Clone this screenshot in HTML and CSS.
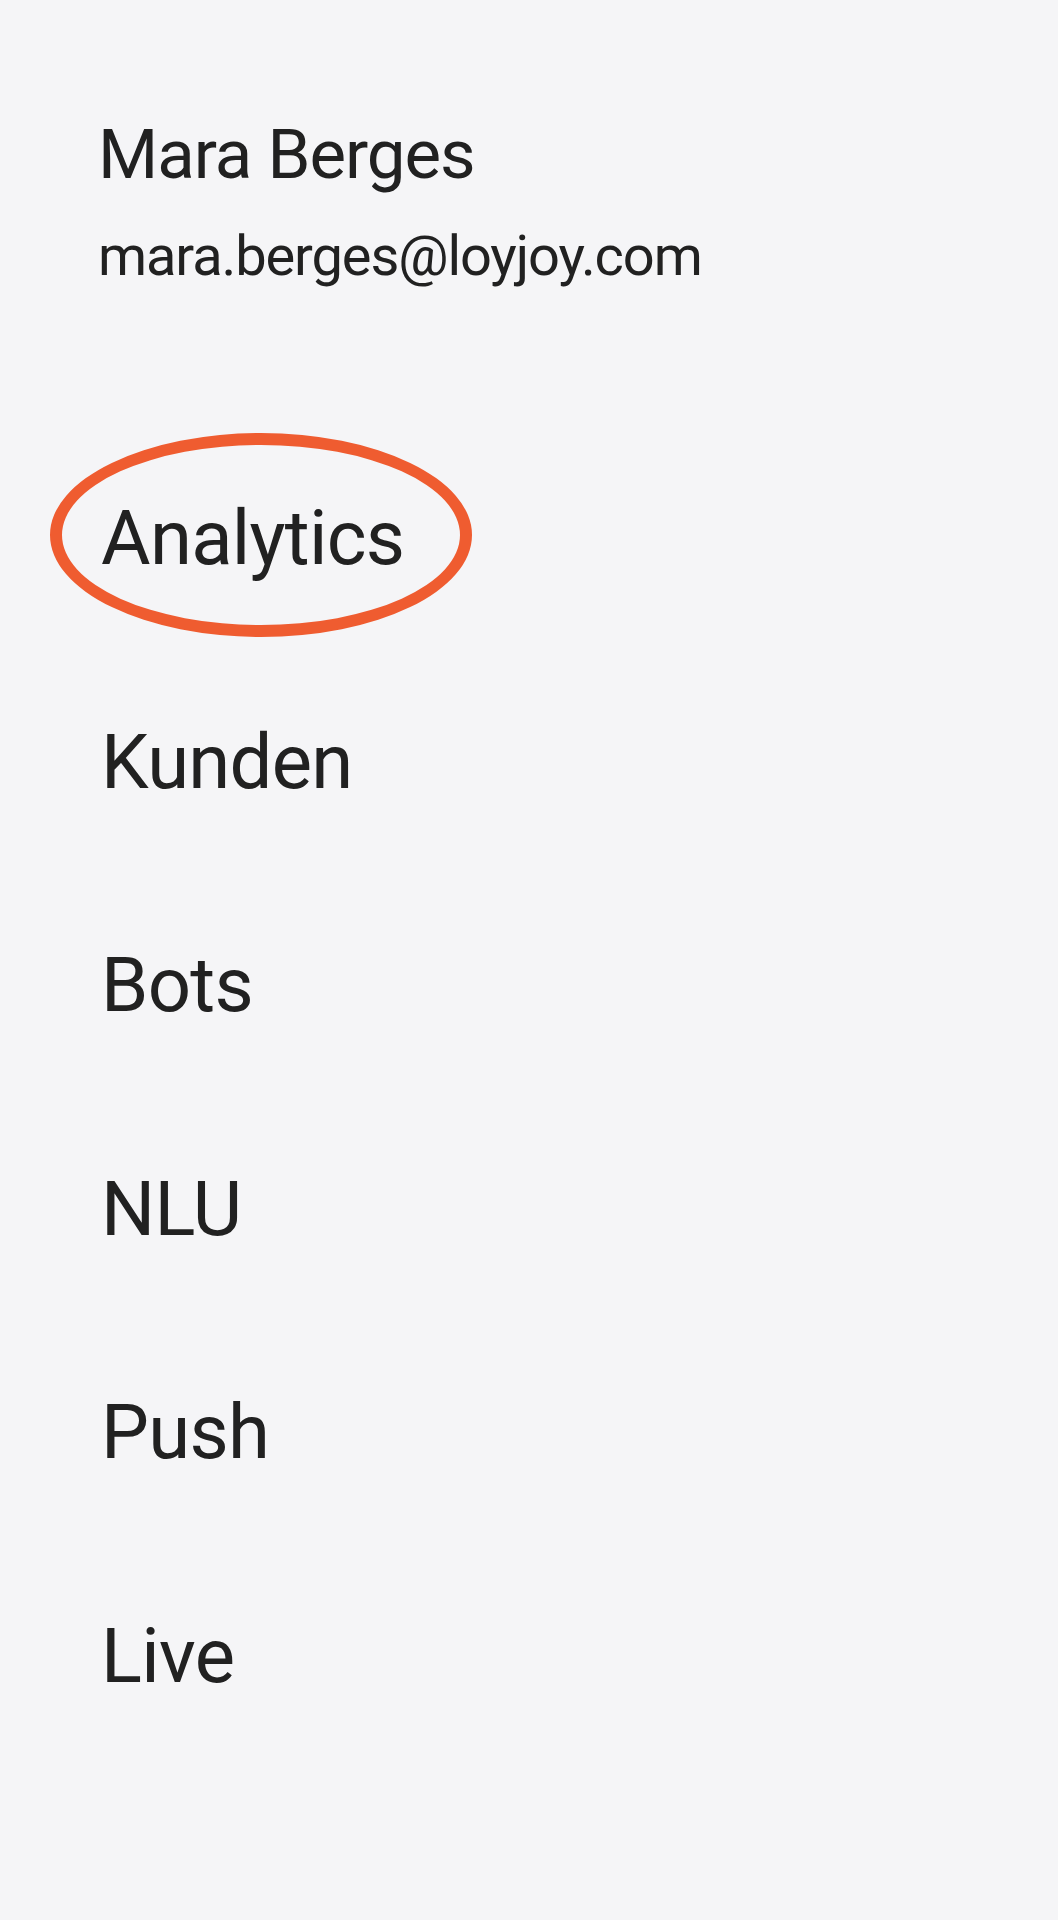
FILE: index.html
```html
<!DOCTYPE html>
<html>
<head>
<meta charset="utf-8">
<link rel="stylesheet" href="styles.css">
</head>
<body>
<div class="drawer">
  <div class="profile">
    <div class="name">Mara Berges</div>
    <div class="email">mara.berges@loyjoy.com</div>
  </div>
  <nav class="menu">
    <div class="item highlighted"><span class="label">Analytics</span><span class="ring"></span></div>
    <div class="item"><span class="label">Kunden</span></div>
    <div class="item"><span class="label">Bots</span></div>
    <div class="item"><span class="label">NLU</span></div>
    <div class="item"><span class="label">Push</span></div>
    <div class="item"><span class="label">Live</span></div>
  </nav>
</div>
</body>
</html>
```

FILE: styles.css
```css
html, body {
  margin: 0;
  padding: 0;
  background: #f5f5f7;
}
body {
  width: 1058px;
  height: 1920px;
  overflow: hidden;
  font-family: Roboto, "Liberation Sans", sans-serif;
  color: #212121;
}
.drawer {
  display: flex;
  flex-direction: column;
}
.profile {
  padding: 114.7px 0 0 98px;
  display: flex;
  flex-direction: column;
}
.name {
  font-size: 69px;
  line-height: 80px;
  letter-spacing: -1px;
}
.email {
  margin-top: 28px;
  font-size: 56px;
  line-height: 66px;
  letter-spacing: -1.1px;
}
.menu {
  margin-top: 137.5px;
  padding-left: 101px;
  display: flex;
  flex-direction: column;
}
.item {
  position: relative;
  height: 223.6px;
  box-sizing: border-box;
  padding-top: 66.8px;
  font-size: 76px;
  line-height: 90px;
  letter-spacing: -0.7px;
}
.label {
  position: relative;
  z-index: 1;
}
.ring {
  position: absolute;
  left: -51px;
  top: 7px;
  width: 422px;
  height: 204px;
  box-sizing: border-box;
  border: 12px solid #ef5c30;
  border-radius: 50%;
}
```
